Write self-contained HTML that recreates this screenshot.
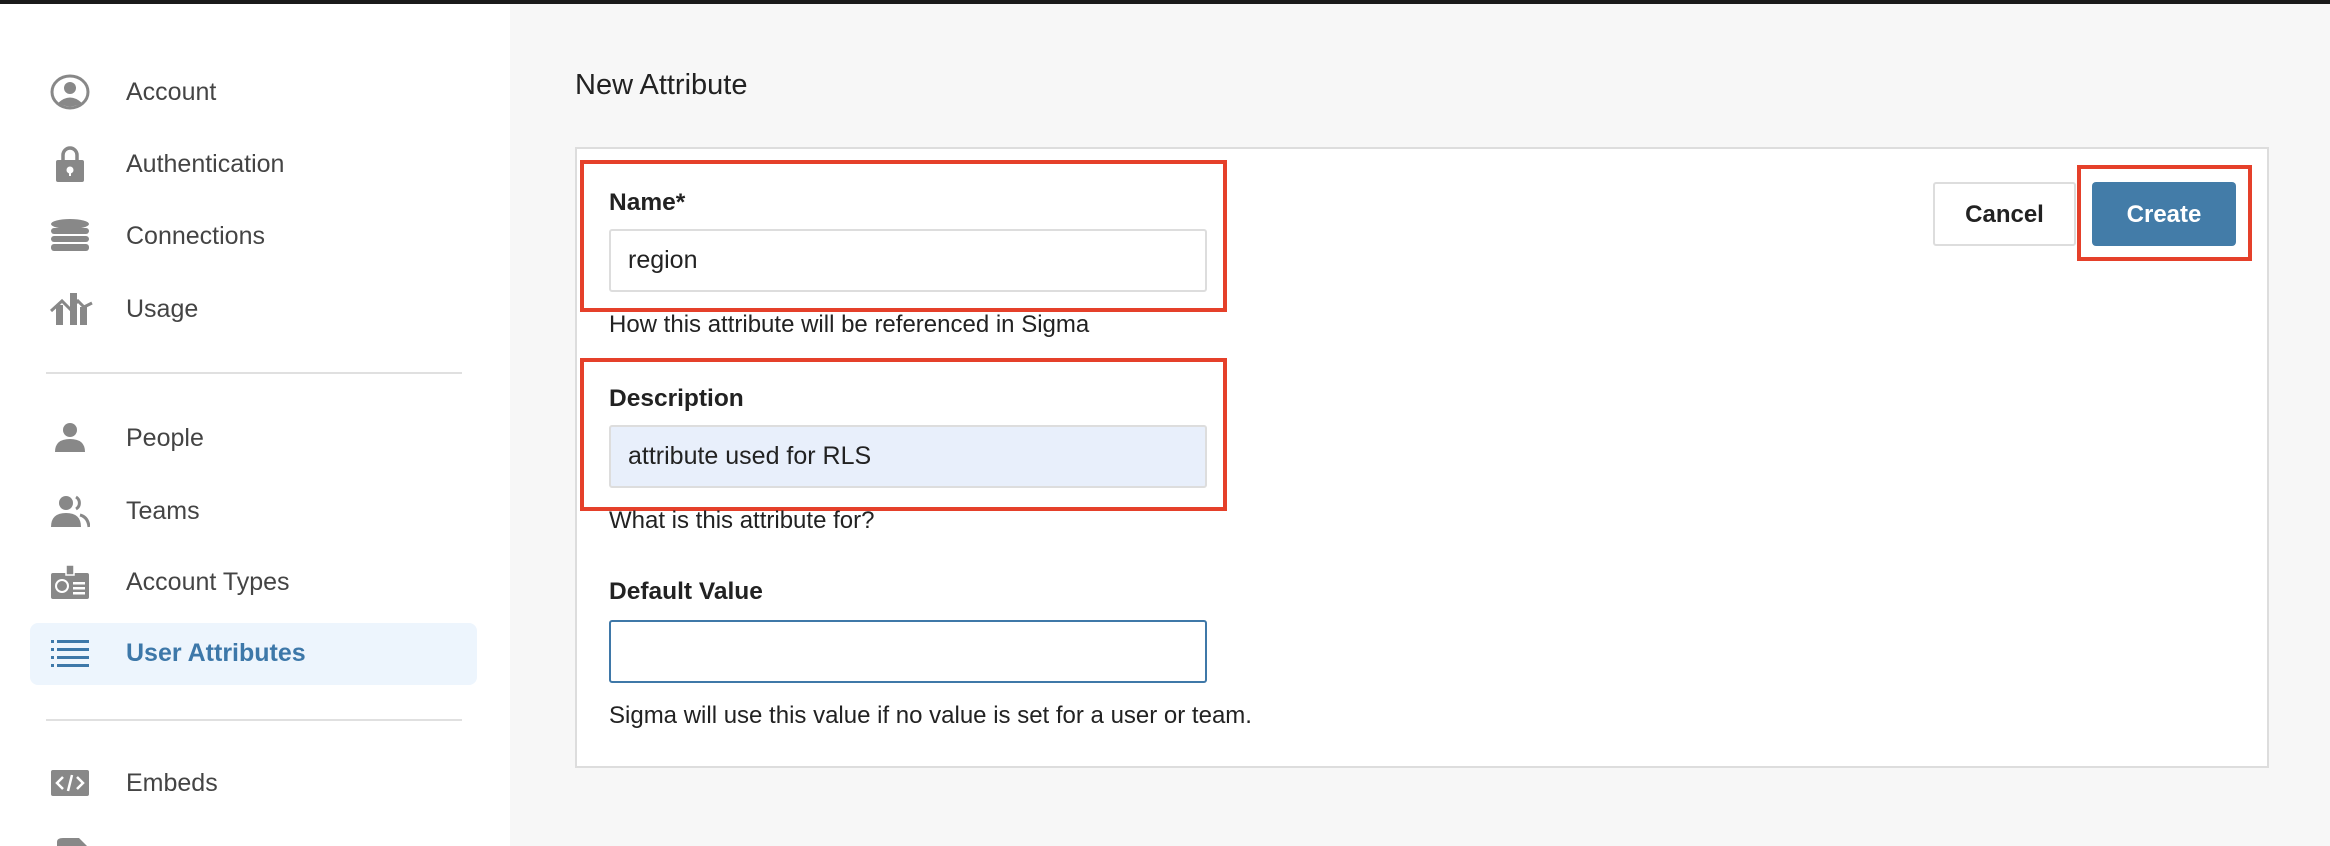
<!DOCTYPE html>
<html><head><style>
*{box-sizing:border-box;margin:0;padding:0}
body{width:2330px;height:846px;overflow:hidden;background:#f7f7f7;font-family:"Liberation Sans",sans-serif;position:relative;color:#222}
.top{position:absolute;left:0;top:0;width:2330px;height:4px;background:#1a1a1a}
.side{position:absolute;left:0;top:4px;width:510px;height:842px;background:#fff}
.item{position:absolute;left:0;height:40px;width:510px;font-size:25px;color:#444;line-height:40px}
.item span{position:absolute;left:126px}
.item svg{position:absolute;left:50px;top:2px}
.hl{position:absolute;left:30px;top:623px;width:447px;height:62px;background:#edf5fd;border-radius:8px}
.div{position:absolute;left:46px;width:416px;height:2px;background:#e0e0e0}
.abs{position:absolute}
.lbl{position:absolute;left:609px;font-size:24.5px;font-weight:bold;color:#222}
.help{position:absolute;left:609px;font-size:24px;color:#222}
.inp{position:absolute;left:609px;width:598px;height:63px;border:2px solid #ddd;border-radius:3px;background:#fff;font-size:25px;padding-left:17px;line-height:59px}
.red{position:absolute;border:4px solid #e5402a}
</style></head><body>
<div class="top"></div>
<div class="side">
<div class="hl" style="top:619px"></div>
<div class="div" style="top:368px"></div>
<div class="div" style="top:715px"></div>
</div>
<div class="item" style="top:72px"><svg width="40" height="36" viewBox="0 0 40 36"><ellipse cx="20" cy="18" rx="18" ry="16" fill="none" stroke="#888" stroke-width="3"/><circle cx="20" cy="14" r="6" fill="#888"/><path d="M8 29 Q20 18 32 29 Q20 36 8 29Z" fill="#888"/></svg><span>Account</span></div>
<div class="item" style="top:144px"><svg width="40" height="36" viewBox="0 0 40 36"><path d="M13 14 V9 a7 7 0 0 1 14 0 V14" fill="none" stroke="#888" stroke-width="3.5"/><rect x="6" y="14" width="28" height="22" rx="2" fill="#888"/><circle cx="20" cy="24" r="3.5" fill="#fff"/><rect x="19" y="25" width="2" height="5" fill="#fff"/></svg><span>Authentication</span></div>
<div class="item" style="top:216px"><svg width="40" height="36" viewBox="0 0 40 36"><ellipse cx="20" cy="6" rx="19" ry="5" fill="#888"/><rect x="1" y="10" width="38" height="6" rx="3" fill="#888"/><rect x="1" y="18" width="38" height="6" rx="3" fill="#888"/><rect x="1" y="26" width="38" height="7" rx="3" fill="#888"/></svg><span>Connections</span></div>
<div class="item" style="top:289px"><svg width="44" height="36" viewBox="0 0 44 36"><rect x="6" y="14" width="7" height="20" fill="#888"/><rect x="20" y="2" width="7" height="32" fill="#888"/><rect x="30" y="16" width="7" height="18" fill="#888"/><path d="M1 20 L12 10 L20 18 L28 10 L34 16 L42 12" fill="none" stroke="#888" stroke-width="3"/></svg><span>Usage</span></div>
<div class="item" style="top:418px"><svg width="40" height="36" viewBox="0 0 40 36"><circle cx="20" cy="10" r="7" fill="#888"/><path d="M5 32 Q5 19 20 19 Q35 19 35 32Z" fill="#888"/></svg><span>People</span></div>
<div class="item" style="top:491px"><svg width="40" height="36" viewBox="0 0 40 36"><circle cx="16" cy="10" r="7" fill="#888"/><path d="M26 4 a7 7 0 0 1 0 12" fill="none" stroke="#888" stroke-width="3"/><path d="M1 34 Q1 20 16 20 Q31 20 31 34Z" fill="#888"/><path d="M30 22 Q38 24 39 34" fill="none" stroke="#888" stroke-width="3"/></svg><span>Teams</span></div>
<div class="item" style="top:562px"><svg width="40" height="36" viewBox="0 0 40 36"><rect x="1" y="9" width="38" height="26" rx="2" fill="#888"/><rect x="16" y="1" width="8" height="10" fill="#888" stroke="#fff" stroke-width="1.5"/><circle cx="12" cy="22" r="6" fill="none" stroke="#fff" stroke-width="2"/><rect x="23" y="18" width="12" height="2.5" fill="#fff"/><rect x="23" y="23" width="12" height="2.5" fill="#fff"/><rect x="23" y="28" width="12" height="2.5" fill="#fff"/></svg><span>Account Types</span></div>
<div class="item" style="top:633px;color:#3d78a9;font-weight:bold"><svg width="40" height="36" viewBox="0 0 40 36"><g fill="#3d78a9"><rect x="1" y="5" width="3" height="3"/><rect x="7" y="5" width="32" height="3"/><rect x="1" y="13" width="3" height="3"/><rect x="7" y="13" width="32" height="3"/><rect x="1" y="21" width="3" height="3"/><rect x="7" y="21" width="32" height="3"/><rect x="1" y="29" width="3" height="3"/><rect x="7" y="29" width="32" height="3"/></g></svg><span>User Attributes</span></div>
<div class="item" style="top:763px"><svg width="40" height="36" viewBox="0 0 40 36"><rect x="1" y="5" width="38" height="26" rx="2" fill="#888"/><path d="M13 12 L7 18 L13 24 M27 12 L33 18 L27 24 M22 10 L18 26" fill="none" stroke="#fff" stroke-width="2.5"/></svg><span>Embeds</span></div>
<svg class="abs" style="left:55px;top:836px" width="36" height="10" viewBox="0 0 36 10"><path d="M2 10 V6 Q2 2 8 2 H24 L32 10Z" fill="#888"/></svg>

<div class="abs" style="left:575px;top:69px;font-size:29px;color:#222">New Attribute</div>
<div class="abs" style="left:575px;top:147px;width:1694px;height:621px;background:#fff;border:2px solid #ddd"></div>

<div class="red" style="left:580px;top:160px;width:647px;height:152px"></div>
<div class="lbl" style="top:189px">Name*</div>
<div class="inp" style="top:229px">region</div>
<div class="help" style="top:311px">How this attribute will be referenced in Sigma</div>

<div class="red" style="left:580px;top:358px;width:647px;height:153px"></div>
<div class="lbl" style="top:385px">Description</div>
<div class="inp" style="top:425px;background:#e8effb">attribute used for RLS</div>
<div class="help" style="top:507px">What is this attribute for?</div>

<div class="lbl" style="top:578px">Default Value</div>
<div class="inp" style="top:620px;border-color:#3f78a8"></div>
<div class="help" style="top:702px">Sigma will use this value if no value is set for a user or team.</div>

<div class="abs" style="left:1933px;top:182px;width:143px;height:64px;border:2px solid #ddd;border-radius:3px;background:#fff;font-size:24px;font-weight:bold;text-align:center;line-height:62px;color:#222">Cancel</div>
<div class="red" style="left:2077px;top:165px;width:175px;height:96px"></div>
<div class="abs" style="left:2092px;top:182px;width:144px;height:64px;border-radius:4px;background:#437ca8;font-size:24px;font-weight:bold;text-align:center;line-height:66px;color:#fff">Create</div>
</body></html>
